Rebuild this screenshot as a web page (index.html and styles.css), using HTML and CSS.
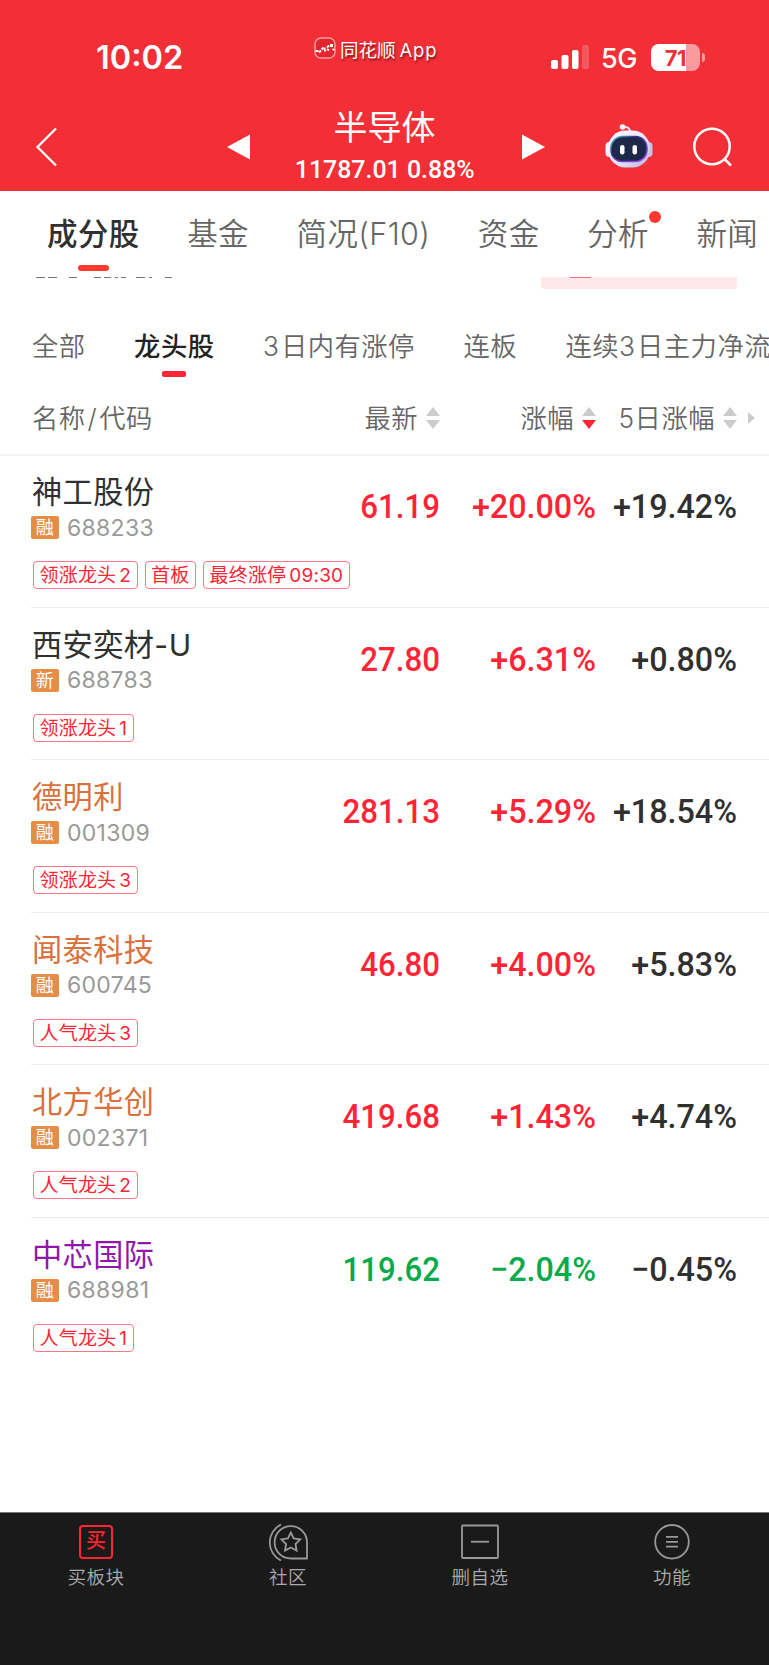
FILE: index.html
```html
<!DOCTYPE html>
<html lang="zh-CN">
<head>
    <meta charset="UTF-8">
    <meta name="viewport" content="width=device-width, initial-scale=1.0">
    <title>半导体</title>
    <link rel="stylesheet" href="styles.css">
</head>
<body>
    <header class="header">
        <div class="status-bar">
            <span class="time">10:02</span>
            <div class="brand">
                <svg width="22" height="22" viewBox="0 0 22 22">
                    <rect x="1" y="1" width="20" height="20" rx="6" fill="#e3262d" stroke="#ff9a9d" stroke-width="1.5"/>
                    <path d="M1.500 14h3M5 15.500l2-2M7.500 12.500l2-2M10.500 10.500l.5 4M13 10.500l2-2M13 12l2 1.500M18.500 12l2 1" stroke="#fff" stroke-width="1.800" fill="none"/>
                    <path d="M16 7h3v3h-3z" fill="#fff"/>
                </svg>
                <span>同花顺<span class="brand-app">App</span></span>
            </div>
            <div class="status-right">
                <svg width="39" height="25" viewBox="0 0 39 25" fill="#fff">
                    <rect x="0" y="15" width="7" height="9" rx="2"/>
                    <rect x="10.500" y="10" width="7" height="14" rx="2"/>
                    <rect x="21" y="5" width="6.500" height="19" rx="2"/>
                    <rect x="31" y="0" width="7" height="24" rx="2" opacity=".2"/>
                </svg>
                <span class="network">5G</span>
                <div class="battery"><span class="battery-level">71</span></div>
                <i class="battery-cap"></i>
            </div>
        </div>
        <div class="title-bar">
            <svg class="back" width="24" height="42" viewBox="0 0 24 42"><path d="M21 2.500L2.500 21L21 39.500" fill="none" stroke="#fff" stroke-width="2.300"/></svg>
            <svg class="prev" width="23" height="26" viewBox="0 0 23 26"><path d="M23 0.500V25.500L0 13z" fill="#fff"/></svg>
            <div class="title">
                <h1>半导体</h1>
                <p><span>11787.01 0.88%</span></p>
            </div>
            <svg class="next" width="23" height="26" viewBox="0 0 23 26"><path d="M0 0.500V25.500L23 13z" fill="#fff"/></svg>
            <svg class="robot" width="48" height="44" viewBox="0 0 48 44">
                <defs>
                    <linearGradient id="shell" x1="0" y1="0" x2="1" y2="1">
                        <stop offset="0" stop-color="#fff"/>
                        <stop offset=".6" stop-color="#e4e0fa"/>
                        <stop offset="1" stop-color="#b4b0e0"/>
                    </linearGradient>
                    <linearGradient id="rim" x1="0" y1="0" x2="1" y2="1">
                        <stop offset="0" stop-color="#4fd0d8"/>
                        <stop offset=".35" stop-color="#3a2a90"/>
                        <stop offset="1" stop-color="#a64df0"/>
                    </linearGradient>
                </defs>
                <path d="M17 3.500C22 2 25 4 25 8" fill="none" stroke="#e9dff2" stroke-width="2"/>
                <circle cx="17.500" cy="3" r="2.800" fill="#fbeef4"/>
                <rect x="0.500" y="18" width="8" height="15" rx="4" fill="#f5f2ff"/>
                <rect x="39.500" y="18" width="8" height="15" rx="4" fill="#c3c3ec"/>
                <rect x="3" y="6.500" width="42" height="37" rx="17.500" fill="url(#shell)"/>
                <rect x="6" y="12.500" width="36" height="25" rx="11.500" fill="#1e2849" stroke="url(#rim)" stroke-width="1.500"/>
                <rect x="15" y="21" width="4.500" height="9.500" rx="2.200" fill="#fff"/>
                <rect x="27.500" y="21" width="4.500" height="9.500" rx="2.200" fill="#fff"/>
            </svg>
            <svg class="search" width="42" height="42" viewBox="0 0 42 42"><g fill="none" stroke="#fff" stroke-width="2.500"><circle cx="20" cy="20.500" r="17.700"/><path d="M32 32.500L39 39.500"/></g></svg>
        </div>
    </header>

    <nav class="tabs">
        <a class="tab active">成分股</a>
        <a class="tab">基金</a>
        <a class="tab">简况(F10)</a>
        <a class="tab">资金</a>
        <a class="tab has-dot">分析</a>
        <a class="tab">新闻</a>
    </nav>

    <main>
        <!-- bottom edge of the card scrolled under the tabs -->
        <div class="scrolled-card">
            <svg width="140" height="2" viewBox="0 0 140 2"><path d="M1 .5h9M13 .5h9M34 .5h8M59 .5h7M69 .5h7M80 .5h3M86 .5h5M101 .5h9M114 .5h3M130 .5h7" stroke="#777"/></svg>
            <div class="card-button"></div>
        </div>

        <div class="filters">
            <a class="filter">全部</a>
            <a class="filter active">龙头股</a>
            <a class="filter"><em>3</em>日内有涨停</a>
            <a class="filter">连板</a>
            <a class="filter">连续<em>3</em>日主力净流</a>
        </div>

        <div class="grid table-head">
            <span class="col-name">名称<em>/</em>代码</span>
            <span class="col">最新<i class="sort"></i></span>
            <span class="col">涨幅<i class="sort desc"></i></span>
            <span class="col">5日涨幅<i class="sort"></i></span>
            <i class="more"></i>
        </div>

        <div class="stock">
            <div class="grid">
                <div class="info">
                    <div class="name">神工股份</div>
                    <div class="code"><b>融</b>688233</div>
                </div>
                <span class="num up">61.19</span>
                <span class="num pct up">+20.00%</span>
                <span class="num pct">+19.42%</span>
            </div>
            <div class="tags"><span>领涨龙头<em>2</em></span><span>首板</span><span>最终涨停<em>09:30</em></span></div>
        </div>

        <div class="stock">
            <div class="grid">
                <div class="info">
                    <div class="name">西安奕材-U</div>
                    <div class="code"><b>新</b>688783</div>
                </div>
                <span class="num up">27.80</span>
                <span class="num pct up">+6.31%</span>
                <span class="num pct">+0.80%</span>
            </div>
            <div class="tags"><span>领涨龙头<em>1</em></span></div>
        </div>

        <div class="stock">
            <div class="grid">
                <div class="info">
                    <div class="name orange">德明利</div>
                    <div class="code"><b>融</b>001309</div>
                </div>
                <span class="num up">281.13</span>
                <span class="num pct up">+5.29%</span>
                <span class="num pct">+18.54%</span>
            </div>
            <div class="tags"><span>领涨龙头<em>3</em></span></div>
        </div>

        <div class="stock">
            <div class="grid">
                <div class="info">
                    <div class="name orange">闻泰科技</div>
                    <div class="code"><b>融</b>600745</div>
                </div>
                <span class="num up">46.80</span>
                <span class="num pct up">+4.00%</span>
                <span class="num pct">+5.83%</span>
            </div>
            <div class="tags"><span>人气龙头<em>3</em></span></div>
        </div>

        <div class="stock">
            <div class="grid">
                <div class="info">
                    <div class="name orange">北方华创</div>
                    <div class="code"><b>融</b>002371</div>
                </div>
                <span class="num up">419.68</span>
                <span class="num pct up">+1.43%</span>
                <span class="num pct">+4.74%</span>
            </div>
            <div class="tags"><span>人气龙头<em>2</em></span></div>
        </div>

        <div class="stock">
            <div class="grid">
                <div class="info">
                    <div class="name purple">中芯国际</div>
                    <div class="code"><b>融</b>688981</div>
                </div>
                <span class="num down">119.62</span>
                <span class="num pct down">−2.04%</span>
                <span class="num pct">−0.45%</span>
            </div>
            <div class="tags"><span>人气龙头<em>1</em></span></div>
        </div>
    </main>

    <footer class="bottom-nav">
        <a>
            <span class="buy-icon">买</span>
            买板块
        </a>
        <a>
            <svg width="40" height="40" viewBox="0 0 40 40" fill="none" stroke="#999" stroke-width="1.800">
                <path d="M39 37.500H23A16.200 16.200 0 1 1 39 21.300z"/>
                <path d="M13 3.500A20 20 0 0 0 13 39.500"/>
                <path d="M22.800 11.500l2.900 6 6.500.9-4.700 4.600 1.100 6.500-5.800-3-5.800 3 1.100-6.500-4.700-4.600 6.500-.9z"/>
            </svg>
            社区
        </a>
        <a>
            <svg width="40" height="40" viewBox="0 0 40 40" fill="none" stroke="#999" stroke-width="1.800">
                <rect x="2" y="4.500" width="36" height="32.500" rx="1"/>
                <path d="M11 20.700h18"/>
            </svg>
            删自选
        </a>
        <a>
            <svg width="40" height="40" viewBox="0 0 40 40" fill="none" stroke="#999" stroke-width="1.800">
                <circle cx="20" cy="20.800" r="16.800"/>
                <path d="M14 15.900h12M14 20.800h12M14 25.700h12"/>
            </svg>
            功能
        </a>
    </footer>
</body>
</html>
```

FILE: styles.css
```css
* {
    box-sizing: border-box;
}
body {
    margin: 0;
    width: 769px;
    height: 1665px;
    display: flex;
    flex-direction: column;
    overflow: hidden;
    background: #fff;
    color: #303030;
    font-family: Inter, "Noto Sans CJK SC", sans-serif;
}
h1, p {
    margin: 0;
}
i, em, b {
    font-style: normal;
    font-weight: inherit;
}
svg {
    display: block;
    flex: none;
}

/* header */
.header {
    height: 191px;
    background: #f22f37;
    color: #fff;
}
.status-bar {
    height: 104px;
    display: grid;
    grid-template-columns: 314px 1fr 218px;
}
.time {
    padding: 38px 0 0 96px;
    font-size: 32.5px;
    line-height: 40px;
    font-weight: 600;
}
.brand {
    display: flex;
    gap: 4px;
    padding-top: 37px;
    font-size: 18.5px;
    line-height: 26px;
    white-space: nowrap;
    text-shadow: 1px 2px 2px rgba(60, 0, 0, 0.6);
}
.brand-app {
    margin-left: 4px;
    letter-spacing: 0.8px;
}
.status-right {
    display: flex;
    align-items: center;
    height: 28px;
    margin-top: 43px;
}
.network {
    width: 49px;
    padding: 3px 0 0 11px;
    font-size: 27px;
    line-height: 28px;
    font-weight: 500;
    letter-spacing: -0.5px;
}
.battery {
    width: 49px;
    height: 27px;
    margin-left: 12px;
    border-radius: 8px;
    overflow: hidden;
    background: #f99a9e;
}
.battery-level {
    display: block;
    width: 35px;
    height: 27px;
    background: #fff;
    color: #f22f37;
    font-size: 22px;
    line-height: 28px;
    font-weight: 700;
    text-align: right;
    letter-spacing: -0.5px;
}
.battery-cap {
    width: 3px;
    height: 9px;
    margin-left: 2px;
    border-radius: 0 4px 4px 0;
    background: #f99a9e;
}
.title-bar {
    display: flex;
    align-items: flex-start;
}
.back {
    margin: 22px 0 0 35px;
}
.prev {
    margin: 30px 0 0 168px;
}
.title {
    width: 273px;
    padding-right: 4px;
    text-align: center;
}
.title h1 {
    font-size: 34px;
    line-height: 48px;
    font-weight: 400;
}
.title p {
    font-family: Roboto, sans-serif;
    font-size: 26.5px;
    line-height: 33px;
    font-weight: 500;
    white-space: nowrap;
}
.title p span {
    display: inline-block;
    transform: scaleX(0.94);
}
.next {
    margin: 30px 0 0 -1px;
}
.robot {
    margin: 20px 0 0 60px;
}
.search {
    margin: 22px 0 0 39px;
}

/* main tabs */
.tabs {
    height: 86px;
    display: flex;
    gap: 47.5px;
    padding-left: 47px;
    white-space: nowrap;
}
.tab {
    position: relative;
    padding-top: 22px;
    font-size: 30.5px;
    line-height: 42px;
    letter-spacing: 0.4px;
    color: #666;
    font-weight: 350;
}
.tab.active {
    color: #303030;
    font-weight: 500;
}
.tab.active::after {
    content: "";
    position: absolute;
    left: 31px;
    top: 74px;
    width: 31px;
    height: 6px;
    border-radius: 3px;
    background: #ff392f;
}
.has-dot::after {
    content: "";
    position: absolute;
    right: -12px;
    top: 20px;
    width: 12px;
    height: 12px;
    border-radius: 50%;
    background: #ff392f;
}

.scrolled-card {
    height: 24px;
    display: flex;
    justify-content: space-between;
    padding: 0 32px 0 35px;
}
.card-button {
    width: 196px;
    height: 12px;
    padding-left: 29px;
    border-radius: 0 0 4px 4px;
    background: #ffe8ea;
}
.card-button::before {
    content: "";
    display: block;
    width: 21px;
    height: 1px;
    background: #f5707c;
}

/* filters */
.filters {
    height: 88px;
    display: flex;
    gap: 48.5px;
    padding-left: 32px;
    overflow: hidden;
    white-space: nowrap;
}
.filter {
    position: relative;
    padding-top: 28px;
    font-size: 26.3px;
    line-height: 36px;
    letter-spacing: 0.5px;
    color: #666;
    font-weight: 350;
}
.filter em {
    margin-right: 1.5px;
}
.filter.active {
    color: #222;
    font-weight: 500;
}
.filter.active::after {
    content: "";
    position: absolute;
    left: 28px;
    top: 70px;
    width: 24px;
    height: 6px;
    border-radius: 2px;
    background: #ff2436;
}

/* table */
.grid {
    display: grid;
    grid-template-columns: 239px 170px 156px 141px 1fr;
    padding-left: 31px;
}
.table-head {
    height: 67px;
    border-bottom: 2px solid #f5f5f5;
    font-size: 26.3px;
    line-height: 36px;
    letter-spacing: 0.5px;
    color: #666;
    font-weight: 350;
    padding-top: 12px;
}
.col-name {
    padding-left: 1px;
}
.col-name em {
    margin: 0 2px;
}
.col {
    display: flex;
    justify-content: flex-end;
    white-space: nowrap;
}
.sort {
    display: flex;
    flex-direction: column;
    gap: 4px;
    margin: 6px 0 0 8px;
}
.sort::before,
.sort::after {
    content: "";
    border: 7px solid transparent;
}
.sort::before {
    border-top: 0;
    border-bottom: 9px solid #ccc;
}
.sort::after {
    border-bottom: 0;
    border-top: 9px solid #ccc;
}
.sort.desc::after {
    border-top-color: #ff2436;
}
.more {
    margin: 11px 0 0 11px;
    width: 0;
    height: 12px;
    border: 6px solid transparent;
    border-left: 7px solid #ccc;
    border-right: 0;
}
.stock {
    height: 152.5px;
    padding-top: 16px;
}
.stock:not(:last-child)::after {
    content: "";
    display: block;
    height: 1px;
    margin: 17.500px 0 0 31px;
    background: #ebebeb;
}
.name {
    padding-left: 1px;
    font-size: 30.2px;
    line-height: 40px;
    letter-spacing: 0.4px;
    white-space: nowrap;
}
.name.orange {
    color: #d9713c;
}
.name.purple {
    color: #9018a8;
}
.code {
    display: flex;
    align-items: center;
    gap: 8px;
    height: 31px;
    font-size: 23px;
    letter-spacing: 0.3px;
    color: #999;
}
.code b {
    width: 28px;
    height: 23px;
    border-radius: 2px;
    background: #e58d47;
    color: #fff;
    font-size: 18px;
    line-height: 24px;
    text-align: center;
}
.num {
    padding-top: 14px;
    font-family: Roboto, sans-serif;
    font-size: 34px;
    line-height: 40px;
    font-weight: 500;
    text-align: right;
    transform: scaleX(0.92);
    transform-origin: right;
}
.num.pct {
    transform: scaleX(0.95);
}
.up {
    color: #ff2436;
}
.down {
    color: #07aa4b;
}
.tags {
    display: flex;
    gap: 7px;
    height: 28px;
    margin: 18px 0 0 33px;
}
.tags span {
    padding: 0 5.5px;
    border: 1px solid #ff7581;
    border-radius: 4px;
    color: #ff2436;
    font-size: 19px;
    line-height: 27px;
    letter-spacing: 0.2px;
    white-space: nowrap;
}
.tags em {
    margin-left: 3px;
}

/* bottom nav */
.bottom-nav {
    height: 153px;
    margin-top: auto;
    display: grid;
    grid-template-columns: repeat(4, 192px);
    background: #1a1a1a;
    border-top: 1px solid #777;
    color: #aaa;
    font-size: 18.5px;
    line-height: 26px;
    font-weight: 350;
    letter-spacing: 0.5px;
}
.bottom-nav a {
    display: flex;
    flex-direction: column;
    align-items: center;
    padding-top: 8px;
    gap: 3px;
}
.buy-icon {
    width: 34px;
    height: 34px;
    margin: 4px 0 2px;
    border: 2px solid #ff2430;
    border-radius: 4px;
    color: #ff2430;
    font-size: 20px;
    line-height: 29px;
    font-weight: 500;
    text-align: center;
    letter-spacing: 0;
}
```
